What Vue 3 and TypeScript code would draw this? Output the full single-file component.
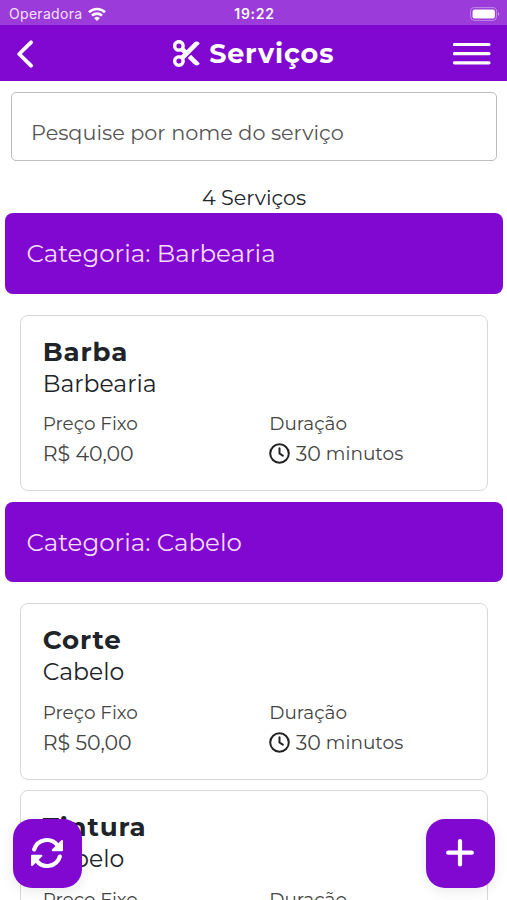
<script setup lang="ts">
interface Service {
  name: string
  category: string
  price: string
  minutes: number
}

interface Group {
  category: string
  services: Service[]
}

const groups: Group[] = [
  {
    category: 'Barbearia',
    services: [{ name: 'Barba', category: 'Barbearia', price: 'R$ 40,00', minutes: 30 }],
  },
  {
    category: 'Cabelo',
    services: [
      { name: 'Corte', category: 'Cabelo', price: 'R$ 50,00', minutes: 30 },
      { name: 'Tintura', category: 'Cabelo', price: '', minutes: 0 },
    ],
  },
]
</script>

<template>
  <div class="screen">
    <div class="status">
      <div class="carrier">
        <span>Operadora</span>
        <svg class="wifi" viewBox="0 0 18 14" fill="none" stroke="#fff" stroke-width="2.6">
          <path d="M1 5.2a11.5 11.5 0 0 1 16 0M4 8.6a7.2 7.2 0 0 1 10 0" />
          <path d="M9 14 6.200 11.200a4 4 0 0 1 5.600 0z" fill="#fff" stroke="none" />
        </svg>
      </div>
      <span class="clock">19:22</span>
      <svg class="battery" viewBox="0 0 30 14">
        <rect x="0.6" y="0.6" width="26" height="12.8" rx="4" fill="none" stroke="#fff" stroke-opacity="0.4" />
        <rect x="2.5" y="2.5" width="22.4" height="9" rx="2.2" fill="#fff" />
        <path d="M28 5v4a2.4 2.4 0 0 0 0-4z" fill="#fff" fill-opacity="0.5" />
      </svg>
    </div>

    <header class="bar">
      <svg class="back" viewBox="0 0 18 28"><path d="M15 2.3 3.2 14 15 25.7" /></svg>
      <h1 class="title">
        <svg class="scissors" viewBox="0 0 512 512" fill="#fff">
          <path d="M256 192l-39.500-39.500c4.900-12.600 7.500-26.200 7.500-40.500C224 50.100 173.900 0 112 0S0 50.100 0 112s50.100 112 112 112c14.300 0 27.900-2.700 40.500-7.500L192 256l-39.500 39.500c-12.600-4.900-26.200-7.500-40.500-7.500C50.100 288 0 338.100 0 400s50.100 112 112 112s112-50.100 112-112c0-14.300-2.700-27.900-7.500-40.500L499.200 76.800c7.100-7.100 7.100-18.500 0-25.600c-28.300-28.300-74.100-28.300-102.400 0L256 192zm22.600 150.600L396.800 460.800c28.300 28.300 74.100 28.300 102.400 0c7.100-7.100 7.100-18.500 0-25.600L342.600 278.600l-64 64zM64 112a48 48 0 1 1 96 0 48 48 0 1 1-96 0zm48 240a48 48 0 1 1 0 96 48 48 0 1 1 0-96z" />
        </svg>
        <span>Serviços</span>
      </h1>
      <svg class="menu" viewBox="0 0 38 24"><path d="M1.500 2.500h34.500M1.500 11.700h34.500M1.500 20.800h34.500" /></svg>
    </header>

    <div class="search"><span>Pesquise por nome do serviço</span></div>
    <p class="count">4 Serviços</p>

    <section v-for="group in groups" :key="group.category" class="group">
      <h2 class="category">Categoria: {{ group.category }}</h2>
      <div class="cards">
        <article v-for="service in group.services" :key="service.name" class="card">
          <h3 class="name">{{ service.name }}</h3>
          <p class="kind">{{ service.category }}</p>
          <div class="details">
            <div>
              <p class="label">Preço Fixo</p>
              <p v-if="service.price" class="value">{{ service.price }}</p>
            </div>
            <div>
              <p class="label">Duração</p>
              <p v-if="service.minutes" class="value duration">
                <svg class="time" viewBox="0 0 22 22"><circle cx="10.500" cy="10.500" r="9.300" /><path d="M10.500 5.300v5.200l3.300 2.200" /></svg>
                <span>{{ service.minutes }}</span>
                <span class="unit">minutos</span>
              </p>
            </div>
          </div>
        </article>
      </div>
    </section>

    <button class="fab refresh" aria-label="Atualizar">
      <svg viewBox="0 0 34 32">
        <path d="M4.200 12.400A13.200 13.200 0 0 1 27.500 8.500M29.800 19.600A13.200 13.200 0 0 1 6.500 23.500" />
        <path class="head" d="M32 4v9.300h-9.300zM2 28v-9.300h9.300z" />
      </svg>
    </button>
    <button class="fab add" aria-label="Adicionar">
      <svg viewBox="0 0 34 32"><path d="M17 4v23.500M5.200 15.700h23.600" /></svg>
    </button>
  </div>
</template>

<style>
body {
  margin: 0;
  overflow: hidden;
  background: #fff;
}
</style>

<style scoped>
.screen {
  position: relative;
  box-sizing: border-box;
  width: 100%;
  height: 900px;
  overflow: hidden;
  background: #fff;
  color: #202327;
  font-family: Montserrat, Inter, "Liberation Sans", sans-serif;
}
h1, h2, h3, p {
  margin: 0;
  font-weight: 400;
  white-space: nowrap;
}
svg {
  display: block;
  flex: none;
}
.status {
  display: grid;
  grid-template-columns: 1fr auto 1fr;
  align-items: center;
  box-sizing: border-box;
  height: 25px;
  padding: 2px 7px 0 9px;
  background: #9b3bd9;
  color: #fff;
  font-family: Inter, sans-serif;
  font-size: 14px;
}
.carrier {
  display: flex;
  align-items: center;
  gap: 6px;
  color: #f3e2fc;
  letter-spacing: 0.3px;
}
.wifi {
  width: 18px;
  height: 14px;
}
.clock {
  font-weight: 600;
  letter-spacing: 0.7px;
}
.battery {
  width: 30px;
  height: 14px;
  justify-self: end;
}
.bar {
  display: grid;
  grid-template-columns: 38px 1fr 38px;
  align-items: center;
  box-sizing: border-box;
  height: 56px;
  padding: 1px 16px 0;
  background: #8008d0;
}
.back {
  width: 18px;
  height: 28px;
}
.back path,
.menu path {
  fill: none;
  stroke: #fff;
  stroke-width: 3.2;
  stroke-linecap: round;
  stroke-linejoin: round;
}
.back path {
  stroke-width: 3.8;
}
.menu {
  width: 38px;
  height: 24px;
}
.title {
  display: flex;
  align-items: center;
  justify-content: center;
  gap: 9.5px;
  color: #fff;
  font-size: 27px;
  font-weight: 700;
  letter-spacing: 0.85px;
}
.scissors {
  width: 27px;
  height: 27px;
}
.search {
  display: flex;
  align-items: center;
  box-sizing: border-box;
  height: 69px;
  margin: 11px 10px 0 11px;
  padding: 11px 19px 0;
  border: 1px solid #bdbdbd;
  border-radius: 5px;
  color: #555;
  font-size: 20.8px;
}
.count {
  height: 52.4px;
  box-sizing: border-box;
  padding: 24px 0 0 1px;
  font-size: 20.7px;
  line-height: 26px;
  text-align: center;
}
.category {
  box-sizing: border-box;
  height: 80.5px;
  margin: 0 4px 0 5px;
  padding-left: 21.5px;
  border-radius: 8px;
  background: #8008d0;
  color: #f5dcfd;
  font-size: 24.5px;
  line-height: 81px;
}
.cards {
  display: flex;
  flex-direction: column;
  gap: 10.5px;
  padding: 21px 19px 10.3px 20px;
}
.card {
  box-sizing: border-box;
  height: 176.5px;
  padding: 20px 21px 0 21.7px;
  border: 1px solid #d8d8d8;
  border-radius: 8px;
}
.name {
  font-size: 26.1px;
  font-weight: 700;
  line-height: 32px;
  letter-spacing: 0.9px;
}
.kind {
  font-size: 23.5px;
  line-height: 32px;
}
.details {
  display: grid;
  grid-template-columns: 226.5px 1fr;
  padding-top: 9.5px;
  color: #444;
}
.label {
  font-size: 18.4px;
  line-height: 30px;
}
.value {
  font-size: 20.5px;
  line-height: 30px;
}
.duration {
  display: flex;
  align-items: center;
  gap: 5px;
}
.unit {
  font-size: 18.5px;
}
.time {
  width: 22px;
  height: 22px;
  margin-left: -0.5px;
  fill: none;
  stroke: #222;
  stroke-width: 2;
  stroke-linecap: round;
}
.fab {
  position: absolute;
  bottom: 12px;
  display: grid;
  place-items: center;
  box-sizing: border-box;
  width: 69px;
  height: 69px;
  padding: 0 1px 1px 0;
  border: 0;
  border-radius: 19px;
  background: #8008d0;
  box-shadow: 0 3px 14px rgba(0, 0, 0, 0.09);
}
.fab svg {
  width: 34px;
  height: 32px;
  fill: none;
  stroke: #fff;
  stroke-width: 4.2;
  stroke-linecap: round;
  stroke-linejoin: round;
}
.fab .head {
  fill: #fff;
  stroke-width: 2;
}
.refresh {
  left: 13px;
}
.add {
  right: 12px;
}
</style>
